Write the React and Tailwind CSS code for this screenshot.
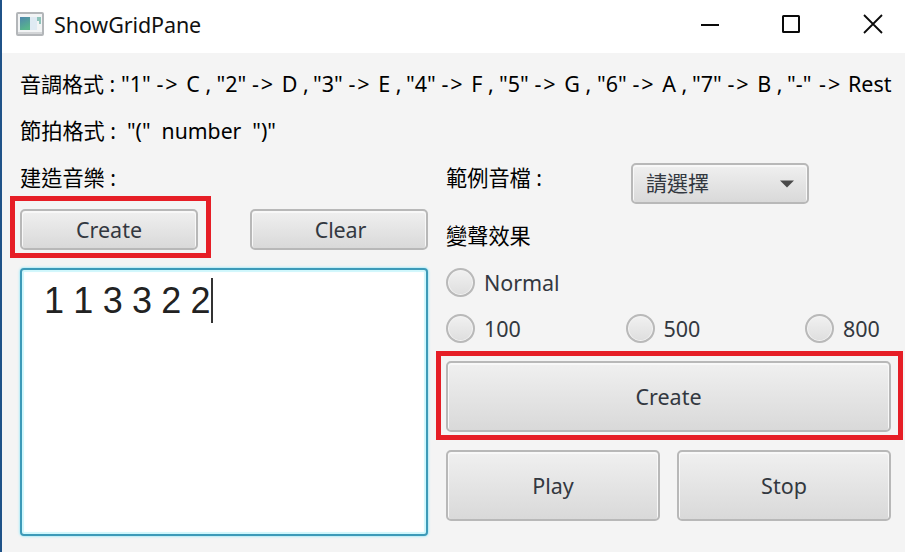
import React from "react";

const notes = [
  ["1", "C"],
  ["2", "D"],
  ["3", "E"],
  ["4", "F"],
  ["5", "G"],
  ["6", "A"],
  ["7", "B"],
];

function Button({ children, className = "" }) {
  return (
    <button
      className={`flex items-center justify-center rounded-[5px] border-2 border-[#b8b8b8] bg-gradient-to-b from-[#f0f0f0] to-[#d9d9d9] pt-px text-[21.5px] text-[#333840] shadow-[inset_0_1px_0_1px_#f8f8f8] ${className}`}
    >
      {children}
    </button>
  );
}

function Radio({ label }) {
  return (
    <label className="flex items-center gap-[9px] text-[21.5px] leading-7 text-[#333840]">
      <span className="size-[29px] rounded-full border-2 border-[#b9b9b9] bg-gradient-to-b from-[#f1f1f1] to-[#dedede] shadow-[inset_0_0_0_1px_#f3f3f3]" />
      <span className="tracking-[-0.1px]">{label}</span>
    </label>
  );
}

function TitleBar() {
  return (
    <header className="flex h-[53px] items-center bg-white pb-[5px] pl-[14px]">
      <svg width="28" height="24" viewBox="0 0 28 24">
        <defs>
          <linearGradient id="appTeal" x1="0" y1="0" x2="0.4" y2="1">
            <stop offset="0" stopColor="#4f86ad" />
            <stop offset="1" stopColor="#58b58c" />
          </linearGradient>
        </defs>
        <rect x="1" y="1" width="26" height="22" rx="1" fill="#f2f4f5" stroke="#b3b6b9" strokeWidth="2" />
        <rect x="4" y="5" width="10" height="13" fill="url(#appTeal)" />
        <rect x="14" y="5" width="7" height="13" fill="#dfeaf3" />
        <path d="M21 5H25V12H23V9H21Z" fill="#8fc4bb" />
        <rect x="2" y="20" width="24" height="2" fill="#d3d5d7" />
      </svg>
      <h1 className="ml-[10px] pt-[2px] text-[21.5px] leading-8 tracking-[-0.1px] text-[#111]">ShowGridPane</h1>
      <div className="ml-auto flex items-center gap-[62px] pr-[22px] text-[#0a0a0a]">
        <svg width="20" height="20" viewBox="0 0 20 20" stroke="currentColor" strokeWidth="2">
          <path d="M2 11H20" />
        </svg>
        <svg width="20" height="20" viewBox="0 0 20 20" fill="none" stroke="currentColor" strokeWidth="2">
          <rect x="2" y="2" width="16" height="16" rx="0.5" />
        </svg>
        <svg width="20" height="20" viewBox="0 0 20 20" stroke="currentColor" strokeWidth="1.8">
          <path d="M1 1L19 19M19 1L1 19" />
        </svg>
      </div>
    </header>
  );
}

export default function App() {
  return (
    <div className="h-[552px] w-[905px] overflow-hidden border-l-2 border-[#1f5288] bg-[#f4f4f4] font-['Noto_Sans','Noto_Sans_CJK_TC',sans-serif] text-black">
      <TitleBar />
      <main className="pl-[18px]">
        <div className="grid h-[62px] grid-cols-[101px_95.5px_96.5px_93px_93px_98px_95px_95px_auto] items-center text-[21.5px] leading-8 whitespace-pre">
          <span className="text-[21px]">音調格式 :</span>
          {notes.map(([n, key]) => (
            <span key={n}>
              {`"${n}" `}
              <span className="mr-px tracking-[2px]">{"->"}</span>
              {` ${key} ,`}
            </span>
          ))}
          <span>
            {'"-" '}
            <span className="ml-[2px] tracking-[2px]">{"->"}</span>
            {" Rest"}
          </span>
        </div>
        <div className="flex h-[31px] items-center text-[21.2px] leading-8 whitespace-pre">
          <span>節拍格式 :</span>
          <span>{'  "("  number  ")"'}</span>
        </div>
        <div className="flex gap-[18px]">
          <section className="w-[408px]">
            <h2 className="mt-3 flex h-[38px] items-center pt-px text-[21.2px] whitespace-pre">建造音樂 :</h2>
            <div className="mt-[13px] flex justify-between">
              <div className="relative">
                <Button className="h-[41px] w-[178px]">Create</Button>
                <div className="absolute top-[-13px] left-[-10px] h-[62px] w-[201px] border-5 border-[#e61e26]" />
              </div>
              <Button className="h-[41px] w-[178px] pl-[3px] tracking-[-0.1px]">Clear</Button>
            </div>
            <div className="mt-[18px] flex h-[268px] items-start rounded-[4px] border-2 border-[#3c9ab8] bg-white pt-2 pl-[22px] shadow-[0_0_2px_1px_#b3ecf8,inset_0_0_1px_2px_#cff7fc]">
              <span className="font-['Liberation_Sans'] text-[36px] leading-[45px] text-[#222] [word-spacing:-0.7px]">1 1 3 3 2 2</span>
              <span className="h-[45px] w-[2px] bg-[#333]" />
            </div>
          </section>
          <section className="w-[445px]">
            <div className="mt-[17px] flex h-[41px] items-start justify-between pr-[82px]">
              <h2 className="-mt-[5px] flex h-[38px] items-center pt-px text-[21.2px] whitespace-pre">範例音檔 :</h2>
              <Button className="h-[41px] w-[178px]">
                <span className="flex-1 pl-[13px] text-left text-[21px]">請選擇</span>
                <svg className="mr-[13px]" width="14" height="8" viewBox="0 0 14 8">
                  <path d="M0 0.5H14L7 7.5Z" fill="#4a4a4a" />
                </svg>
              </Button>
            </div>
            <h2 className="mt-3 flex h-[38px] items-center pt-px text-[21.2px]">變聲效果</h2>
            <div className="mt-[14px]">
              <Radio label="Normal" />
            </div>
            <div className="mt-[17px] grid grid-cols-[179.5px_179.5px_auto]">
              <Radio label="100" />
              <Radio label="500" />
              <Radio label="800" />
            </div>
            <div className="relative mt-[18px]">
              <Button className="h-[71px] w-full">Create</Button>
              <div className="absolute top-[-10px] left-[-10px] h-[89px] w-[467px] border-5 border-[#e61e26]" />
            </div>
            <div className="mt-[18px] flex justify-between">
              <Button className="h-[71px] w-[214px]">Play</Button>
              <Button className="h-[71px] w-[214px]">Stop</Button>
            </div>
          </section>
        </div>
      </main>
    </div>
  );
}
